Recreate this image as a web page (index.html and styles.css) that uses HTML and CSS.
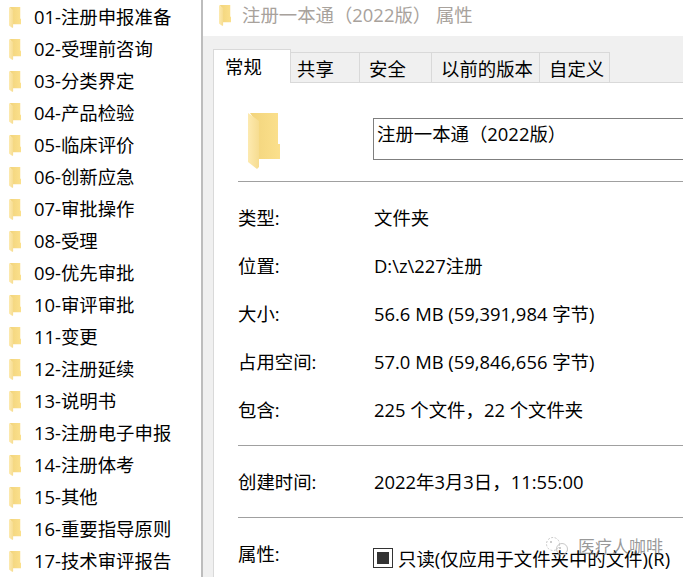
FILE: index.html
```html
<!DOCTYPE html>
<html lang="zh-CN">
<head>
<meta charset="utf-8">
<title>属性</title>
<link rel="stylesheet" href="styles.css">
</head>
<body>
<svg class="defs" width="0" height="0" aria-hidden="true">
  <defs>
    <linearGradient id="back" x1="0" x2="1" y1="0" y2="0"><stop offset="0" stop-color="#f2d47c"/><stop offset="1" stop-color="#fbe08c"/></linearGradient>
    <linearGradient id="front" x1="0" x2="1" y1="0" y2="0"><stop offset="0" stop-color="#fdeab0"/><stop offset="1" stop-color="#f6dc90"/></linearGradient>
    <symbol id="folder" viewBox="0 0 32 56">
      <path fill="url(#back)" d="M2 0H30V31H32V46H9V10Z"/>
      <path fill="url(#front)" d="M0 0L11 8V54L9 56L0 49Z"/>
    </symbol>
  </defs>
</svg>
<main class="screen">
  <ul class="files">
    <li class="file"><svg class="ficon"><use href="#folder"/></svg>01-注册申报准备</li>
    <li class="file"><svg class="ficon"><use href="#folder"/></svg>02-受理前咨询</li>
    <li class="file"><svg class="ficon"><use href="#folder"/></svg>03-分类界定</li>
    <li class="file"><svg class="ficon"><use href="#folder"/></svg>04-产品检验</li>
    <li class="file"><svg class="ficon"><use href="#folder"/></svg>05-临床评价</li>
    <li class="file"><svg class="ficon"><use href="#folder"/></svg>06-创新应急</li>
    <li class="file"><svg class="ficon"><use href="#folder"/></svg>07-审批操作</li>
    <li class="file"><svg class="ficon"><use href="#folder"/></svg>08-受理</li>
    <li class="file"><svg class="ficon"><use href="#folder"/></svg>09-优先审批</li>
    <li class="file"><svg class="ficon"><use href="#folder"/></svg>10-审评审批</li>
    <li class="file"><svg class="ficon"><use href="#folder"/></svg>11-变更</li>
    <li class="file"><svg class="ficon"><use href="#folder"/></svg>12-注册延续</li>
    <li class="file"><svg class="ficon"><use href="#folder"/></svg>13-说明书</li>
    <li class="file"><svg class="ficon"><use href="#folder"/></svg>13-注册电子申报</li>
    <li class="file"><svg class="ficon"><use href="#folder"/></svg>14-注册体考</li>
    <li class="file"><svg class="ficon"><use href="#folder"/></svg>15-其他</li>
    <li class="file"><svg class="ficon"><use href="#folder"/></svg>16-重要指导原则</li>
    <li class="file"><svg class="ficon"><use href="#folder"/></svg>17-技术审评报告</li>
  </ul>
  <section class="dialog">
    <header class="titlebar"><svg class="ficon title-icon"><use href="#folder"/></svg><span>注册一本通（2022版） 属性</span></header>
    <div class="chrome">
      <nav class="tabs">
        <span class="tab active">常规</span>
        <span class="tab w69">共享</span>
        <span class="tab w72">安全</span>
        <span class="tab w108">以前的版本</span>
        <span class="tab w70">自定义</span>
      </nav>
      <div class="panel">
        <div class="head">
          <svg class="big-icon"><use href="#folder"/></svg>
          <div class="namebox">注册一本通（2022版）</div>
        </div>
        <hr class="sep">
        <dl class="props">
          <div class="row"><dt>类型:</dt><dd>文件夹</dd></div>
          <div class="row"><dt>位置:</dt><dd>D:\z\227注册</dd></div>
          <div class="row"><dt>大小:</dt><dd>56.6 MB (59,391,984 字节)</dd></div>
          <div class="row"><dt>占用空间:</dt><dd>57.0 MB (59,846,656 字节)</dd></div>
          <div class="row"><dt>包含:</dt><dd>225 个文件，22 个文件夹</dd></div>
        </dl>
        <hr class="sep">
        <dl class="props">
          <div class="row"><dt>创建时间:</dt><dd>2022年3月3日，11:55:00</dd></div>
        </dl>
        <hr class="sep">
        <dl class="props">
          <div class="row"><dt>属性:</dt><dd class="attr"><span class="check"><span class="mark"></span></span>只读(仅应用于文件夹中的文件)(R)</dd></div>
        </dl>
      </div>
    </div>
  </section>
</main>
<div class="watermark">
  <svg class="wm-icon" viewBox="0 0 26 20"><circle cx="9" cy="8" r="6.5" fill="none" stroke="#c8c8c8" stroke-width="1" stroke-dasharray="2 1.5"/><circle cx="18" cy="13" r="5.5" fill="none" stroke="#c8c8c8" stroke-width="1"/><circle cx="7" cy="6" r="1" fill="#bbb"/><circle cx="16" cy="12" r="1" fill="#bbb"/></svg>
  <span>医疗人咖啡</span>
</div>
</body>
</html>
```
FILE: styles.css
```css
* { box-sizing: border-box; }
html, body { margin: 0; height: 100%; overflow: hidden; background: #fff; }
body {
  font-family: "Open Sans", "Noto Sans CJK SC", sans-serif;
  font-size: 18.4px;
  color: #000;
  position: relative;
}
.defs { position: absolute; }
.screen { display: flex; height: 577px; }
.files {
  list-style: none;
  margin: 0;
  padding: 0 0 0 8px;
  width: 201px;
  flex: none;
}
.file {
  display: flex;
  align-items: center;
  gap: 12px;
  height: 32px;
  padding-bottom: 1px;
  white-space: nowrap;
}
.ficon { width: 14px; height: 21px; flex: none; margin-top: 3px; }
.dialog {
  flex: 1;
  min-width: 0;
  border-left: 2px solid #bdbdbd;
  display: flex;
  flex-direction: column;
}
.titlebar {
  height: 36px;
  flex: none;
  display: flex;
  align-items: center;
  gap: 10px;
  padding: 0 0 9px 15px;
  color: #a8a29c;
  white-space: pre;
}
.chrome {
  flex: 1;
  background: #f0f0f0;
  padding: 12px 0 0 10px;
  display: flex;
  flex-direction: column;
}
.tabs { display: flex; align-items: flex-end; height: 34px; flex: none; position: relative; z-index: 1; }
.tab {
  height: 30px;
  display: flex;
  align-items: center;
  padding: 1px 0 0 6px;
  background: #f0f0f0;
  border: 1px solid #d9d9d9;
  border-left-width: 0;
  border-bottom-width: 0;
  white-space: nowrap;
}
.tab.active {
  width: 78px;
  height: 34px;
  background: #fff;
  border-left-width: 1px;
  padding: 0 0 2px 11px;
  margin-bottom: -1px;
}
.w69 { width: 69px; }
.w72 { width: 72px; padding-left: 9px; }
.w108 { width: 108px; padding-left: 9px; }
.w70 { width: 70px; padding-left: 9px; }
.panel {
  flex: 1;
  background: #fff;
  border-top: 1px solid #d9d9d9;
  border-left: 1px solid #d9d9d9;
  padding: 0 0 0 24px;
}
.head { display: flex; height: 98px; }
.big-icon { width: 32px; height: 56px; margin: 30px 0 0 10px; flex: none; }
.namebox {
  margin: 35px 0 0 93px;
  height: 42px;
  flex: 1;
  border: 1px solid #7f7f7f;
  border-right-width: 0;
  padding: 1px 0 0 3px;
  white-space: nowrap;
}
.sep { margin: 0; border: 0; border-top: 1px solid #a0a0a0; }
.props { margin: 0; padding: 12px 0 11px; }
.row { display: flex; height: 48px; padding-bottom: 3px; align-items: center; white-space: nowrap; }
dt { width: 136px; flex: none; }
dd { margin: 0; }
.attr { display: flex; align-items: center; gap: 5px; margin: 10px 0 0 -1px; }
.check {
  width: 20px;
  height: 20px;
  border: 1px solid #333;
  display: flex;
  align-items: center;
  justify-content: center;
  background: #fff;
}
.mark { width: 12px; height: 12px; background: #333; }
.watermark {
  position: absolute;
  left: 544px;
  top: 533px;
  display: flex;
  align-items: center;
  gap: 8px;
  color: rgba(120, 120, 120, 0.75);
  font-size: 17px;
  white-space: nowrap;
}
.wm-icon { width: 26px; height: 20px; }
```
